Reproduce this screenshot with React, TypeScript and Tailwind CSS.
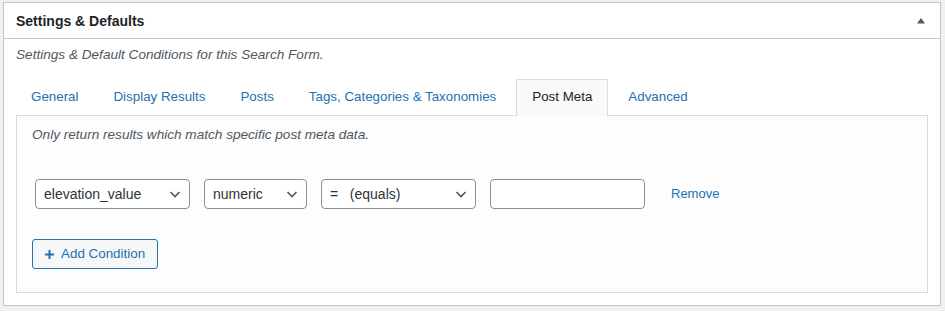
import React from "react";

const font = { fontFamily: '"Liberation Sans", Arial, sans-serif' };

function Chevron() {
  return (
    <svg width="14" height="14" viewBox="0 0 14 14" className="shrink-0">
      <path d="M2.5 5 L7 9.5 L11.5 5" fill="none" stroke="#50575e" strokeWidth="1.6" />
    </svg>
  );
}

function Select({ value, width }: { value: string; width: string }) {
  return (
    <div
      className={`${width} h-[30px] border border-[#8c8f94] rounded-[4px] bg-white flex items-center justify-between pl-[8px] pr-[7px] text-[14px] text-[#2c3338] whitespace-pre`}
    >
      <span>{value}</span>
      <Chevron />
    </div>
  );
}

const tabs = ["General", "Display Results", "Posts", "Tags, Categories & Taxonomies", "Post Meta", "Advanced"];

export default function App() {
  return (
    <div className="w-[945px] h-[311px] bg-[#f0f0f1] pt-[2px] pl-[3px] pr-[4px]" style={font}>
      <div className="h-[304px] border border-[#c3c4c7] bg-white flex flex-col">
        {/* header */}
        <div className="h-[36px] border-b border-[#c3c4c7] flex items-center justify-between pl-3 pr-[14px]">
          <h2 className="text-[14px] font-bold text-[#1d2327] leading-none">Settings &amp; Defaults</h2>
          <svg width="10" height="7" viewBox="0 0 10 7">
            <path d="M1 6.5 L5 1 L9 6.5 Z" fill="#50575e" />
          </svg>
        </div>

        <div className="px-3 pt-[8px]">
          <p className="text-[13.6px] leading-[16px] italic text-[#50575e]">
            Settings &amp; Default Conditions for this Search Form.
          </p>

          {/* tabs */}
          <div className="flex mt-[16px] gap-[5px] -mb-px relative">
            {tabs.map((t) =>
              t === "Post Meta" ? (
                <div
                  key={t}
                  className="h-[37px] px-[15px] flex items-center pb-[1px] border border-b-0 border-[#dcdcde] bg-[#f9f9f9] text-[13.35px] text-[#1d2327]"
                >
                  {t}
                </div>
              ) : (
                <div key={t} className="h-[37px] px-[15px] pb-[1px] flex items-center text-[13.35px] text-[#2271b1]">
                  {t}
                </div>
              )
            )}
          </div>

          {/* panel */}
          <div className="h-[178px] border border-[#dcdcde] bg-[#fdfdfd] pt-[11px] pl-[15px]">
            <p className="text-[13.6px] leading-[16px] italic text-[#50575e]">
              Only return results which match specific post meta data.
            </p>

            <div className="flex items-center gap-[14px] mt-[36px] pl-[3px]">
              <Select value="elevation_value" width="w-[155px]" />
              <Select value="numeric" width="w-[103px]" />
              <Select value={"=   (equals)"} width="w-[155px]" />
              <div className="w-[155px] h-[30px] border border-[#8c8f94] rounded-[4px] bg-white" />
              <a className="ml-[12px] text-[13px] text-[#2271b1]">Remove</a>
            </div>

            <button className="mt-[30px] h-[30px] w-[126px] border border-[#2271b1] rounded-[3px] bg-[#f6f7f7] flex items-center pl-[12px] gap-[7px] text-[13.4px] text-[#2271b1]">
              <svg width="9" height="9" viewBox="0 0 9 9">
                <path d="M4.5 0 V9 M0 4.5 H9" stroke="#2271b1" strokeWidth="2" />
              </svg>
              <span>Add Condition</span>
            </button>
          </div>
        </div>
      </div>
    </div>
  );
}
